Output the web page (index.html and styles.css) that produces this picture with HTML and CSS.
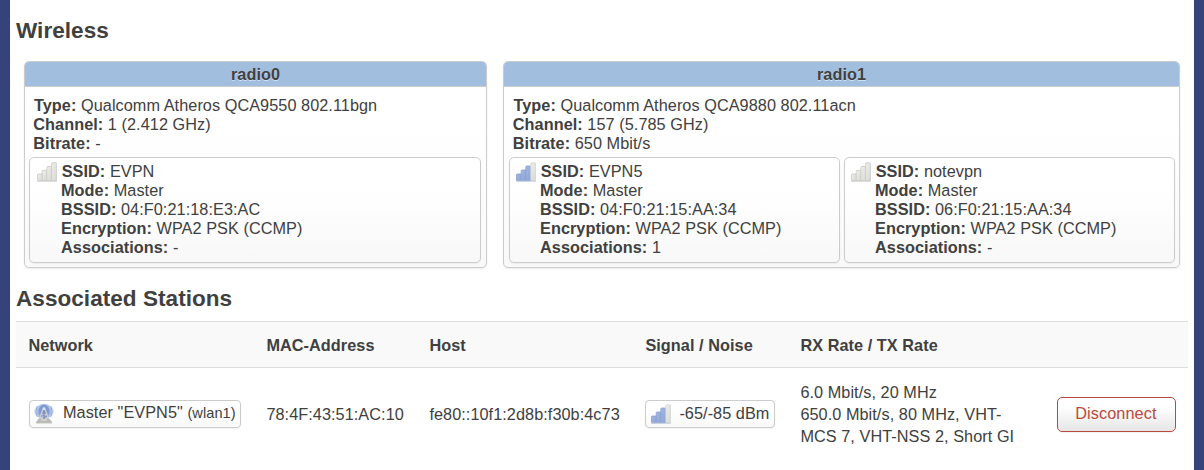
FILE: index.html
```html
<!DOCTYPE html>
<html lang="en">
<head>
<meta charset="utf-8">
<title>Wireless</title>
<link rel="stylesheet" href="styles.css">
</head>
<body>
<svg class="defs" aria-hidden="true">
  <defs>
    <linearGradient id="grey" x1="0" y1="0" x2="1" y2="1"><stop offset="0" stop-color="#efefec"/><stop offset="1" stop-color="#d6d7d2"/></linearGradient>
    <linearGradient id="blue" x1="0" y1="0" x2="1" y2="1"><stop offset="0" stop-color="#a4b9e2"/><stop offset="1" stop-color="#8aa3d6"/></linearGradient>
    <symbol id="bars-off" viewBox="0 0 20 20">
      <g fill="url(#grey)" stroke="#c9cac6" stroke-width=".8"><rect x=".5" y="12" width="5" height="6.8" rx=".8"/><rect x="5.2" y="8.3" width="5" height="10.5" rx=".8"/><rect x="9.8" y="4.5" width="5" height="14.3" rx=".8"/><rect x="14.6" y=".8" width="5" height="18" rx=".8"/></g>
      <path d="M0 19.2h20" stroke="#c6c7c4" stroke-width=".8"/>
    </symbol>
    <symbol id="bars-on" viewBox="0 0 20 20">
      <g fill="url(#blue)" stroke="#88a1d2" stroke-width=".8"><rect x=".5" y="12" width="5" height="6.8" rx=".8"/><rect x="5.2" y="8" width="5" height="10.8" rx=".8"/><rect x="9.8" y="4" width="5" height="14.8" rx=".8"/></g>
      <rect x="14.8" y=".8" width="4.8" height="18" rx="1" fill="url(#grey)" stroke="#d3d4cf" stroke-width=".8"/>
      <path d="M0 19.2h20" stroke="#b6c0d3" stroke-width=".8"/>
    </symbol>
    <symbol id="antenna" viewBox="0 0 20 20">
      <ellipse cx="10" cy="7.5" rx="9.9" ry="7.5" fill="#d5def1"/>
      <ellipse cx="10" cy="7.5" rx="7.7" ry="7.5" fill="#a9bde5"/>
      <ellipse cx="10" cy="7.4" rx="5.4" ry="6.6" fill="#7f9ad3"/>
      <path d="M3.2 2.4Q.2 7.5 3.2 12.7M16.8 2.4q3 5.1 0 10.3" fill="none" stroke="#8ba3d4" stroke-width=".9"/>
      <path d="M9 5 5 16M11 5l4 11M7.5 10.5h5L6 14.5h8" fill="none" stroke="#c8ccd4" stroke-width="1.3"/>
      <path d="M10 7v8" stroke="#8a8f9b" stroke-width="1.4"/>
      <circle cx="10" cy="4.7" r="1.4" fill="#dfe5f0"/>
      <path d="M4.5 15h11l2.7 3.3H2z" fill="#b9bab8"/><path d="M2 18.8h16" stroke="#a8a9a5" stroke-width="1"/><path d="M7 16h6" stroke="#e5e5e1"/>
    </symbol>
  </defs>
</svg>
<main class="page">
  <h3 class="title">Wireless</h3>
  <div class="radios">
    <section class="card radio-a">
      <div class="card-head">radio0</div>
      <div class="card-body">
        <div class="info"><span class="lead"><b>Type:</b> Qualcomm Atheros QCA9550 802.11bgn</span><br><b>Channel:</b> 1 (2.412 GHz)<br><b>Bitrate:</b> -</div>
        <div class="nets">
          <div class="net"><svg class="icon"><use href="#bars-off"/></svg><div><span class="lead"><b>SSID:</b> EVPN</span><br><b>Mode:</b> Master<br><b>BSSID:</b> 04:F0:21:18:E3:AC<br><b>Encryption:</b> WPA2 PSK (CCMP)<br><b>Associations:</b> -</div></div>
        </div>
      </div>
    </section>
    <section class="card radio-b">
      <div class="card-head">radio1</div>
      <div class="card-body">
        <div class="info"><span class="lead"><b>Type:</b> Qualcomm Atheros QCA9880 802.11acn</span><br><b>Channel:</b> 157 (5.785 GHz)<br><b>Bitrate:</b> 650 Mbit/s</div>
        <div class="nets">
          <div class="net"><svg class="icon"><use href="#bars-on"/></svg><div><span class="lead"><b>SSID:</b> EVPN5</span><br><b>Mode:</b> Master<br><b>BSSID:</b> 04:F0:21:15:AA:34<br><b>Encryption:</b> WPA2 PSK (CCMP)<br><b>Associations:</b> 1</div></div>
          <div class="net"><svg class="icon"><use href="#bars-off"/></svg><div><span class="lead"><b>SSID:</b> notevpn</span><br><b>Mode:</b> Master<br><b>BSSID:</b> 06:F0:21:15:AA:34<br><b>Encryption:</b> WPA2 PSK (CCMP)<br><b>Associations:</b> -</div></div>
        </div>
      </div>
    </section>
  </div>
  <h3 class="title stations-title">Associated Stations</h3>
  <div class="row head">
    <div>Network</div><div>MAC-Address</div><div>Host</div><div>Signal / Noise</div><div>RX Rate / TX Rate</div><div></div>
  </div>
  <div class="row">
    <div><span class="badge network"><svg class="icon"><use href="#antenna"/></svg><span>Master "EVPN5" <small>(wlan1)</small></span></span></div>
    <div>78:4F:43:51:AC:10</div>
    <div>fe80::10f1:2d8b:f30b:4c73</div>
    <div><span class="badge signal"><svg class="icon"><use href="#bars-on"/></svg><span>-65/-85 dBm</span></span></div>
    <div>6.0 Mbit/s, 20 MHz<br>650.0 Mbit/s, 80 MHz, VHT-<br>MCS 7, VHT-NSS 2, Short GI</div>
    <div class="action"><button class="disconnect">Disconnect</button></div>
  </div>
</main>
</body>
</html>
```
FILE: styles.css
```css
* { box-sizing: border-box; }
body {
  margin: 0;
  background: #35437a;
  color: #404040;
  font: 16.25px/19px "Liberation Sans", Arial, sans-serif;
  letter-spacing: .06px;
}
.defs { display: block; width: 0; height: 0; }
.page {
  margin: 0 10px;
  padding: 8px 6px 0;
  height: 470px;
  overflow: hidden;
  background: #fff;
}
.title { margin: 0; font-size: 22.5px; line-height: 45px; }
.radios { display: flex; gap: 16px; margin: 8px 8px 0; height: 207px; }
.card {
  display: flex;
  flex-direction: column;
  border: 1px solid #ccc;
  border-radius: 5px;
  background: linear-gradient(#fff, #fff 30%, #f9f9f9);
  box-shadow: 0 1px 2px rgba(0, 0, 0, .08);
  overflow: hidden;
}
.radio-a { width: 463px; }
.radio-b { width: 677px; }
.card-head {
  height: 25px;
  line-height: 25px;
  text-align: center;
  font-weight: bold;
  text-shadow: 0 1px 0 #fff8;
  background: #a2bedf;
  border-bottom: 1px solid #ccc;
}
.card-body { padding: 9px 5px 0 4px; }
.radio-b .card-body { padding: 9px 4px 0 5px; }
.info { padding-left: 4.3px; height: 61px; }
.radio-b .info { padding-left: 3.8px; }
.lead { margin-left: .7px; }
.nets { display: flex; gap: 4px; }
.net {
  flex: 1;
  display: flex;
  gap: 4px;
  height: 106px;
  padding: 4px 7px;
  border: 1px solid #ccc;
  border-radius: 5px;
  background: linear-gradient(#fff, #fff 30%, #f8f8f8);
  box-shadow: 0 1px 2px rgba(0, 0, 0, .06);
}
.radio-b .net { padding-left: 6px; }
.icon { display: block; width: 20px; height: 20px; flex: none; }
.stations-title { margin-top: 8px; }
.row {
  display: grid;
  grid-template-columns: 238px 163px 216px 155px 256.5px 143.5px;
  align-items: center;
  height: 93px;
  line-height: 22px;
  border-top: 1px solid #ddd;
}
.row > div { padding-left: 12.4px; }
.head { height: 46px; font-weight: bold; background: #f9f9f9; }
.badge {
  display: flex;
  height: 28px;
  align-items: center;
  border: 1px solid #ccc;
  border-radius: 4px;
  background: linear-gradient(#fff, #fff 30%, #f9f9f9);
  box-shadow: 0 1px 2px rgba(0, 0, 0, .06);
  white-space: nowrap;
}
.badge > span { padding-bottom: 3px; }
.network { width: 212px; margin-left: .6px; padding-left: 4px; gap: 9px; }
.network small { font-size: 14.6px; }
.signal { width: 130px; padding-left: 5px; gap: 8px; }
.action { display: flex; }
.disconnect {
  width: 119px;
  height: 35px;
  padding: 0 1px 2px 0;
  border: 1px solid #b94a3f;
  border-radius: 5px;
  color: #b94a3f;
  font: inherit;
  letter-spacing: .1px;
  background: linear-gradient(#fff, #fff 25%, #e6e6e6) padding-box;
  box-shadow: 0 1px 2px rgba(0, 0, 0, .06);
}
```
